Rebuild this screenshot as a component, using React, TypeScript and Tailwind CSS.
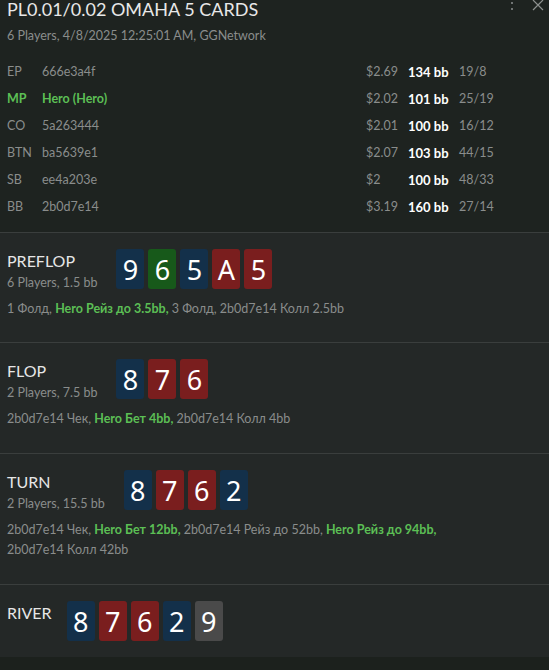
const players = [
  { pos: "EP", name: "666e3a4f", stack: "$2.69", bb: "134 bb", stats: "19/8" },
  { pos: "MP", name: "Hero (Hero)", stack: "$2.02", bb: "101 bb", stats: "25/19", hero: true },
  { pos: "CO", name: "5a263444", stack: "$2.01", bb: "100 bb", stats: "16/12" },
  { pos: "BTN", name: "ba5639e1", stack: "$2.07", bb: "103 bb", stats: "44/15" },
  { pos: "SB", name: "ee4a203e", stack: "$2", bb: "100 bb", stats: "48/33" },
  { pos: "BB", name: "2b0d7e14", stack: "$3.19", bb: "160 bb", stats: "27/14" },
];

type Suit = "b" | "g" | "r" | "x";
const suitBg: Record<Suit, string> = {
  b: "bg-[#13304a]",
  g: "bg-[#17591a]",
  r: "bg-[#7a1e1e]",
  x: "bg-[#4a4a4a]",
};

function Card({ v, s }: { v: string; s: Suit }) {
  return (
    <div
      className={`${suitBg[s]} flex h-10 w-7 items-center justify-center rounded-[3px] font-['Noto_Sans'] text-[27px] leading-none text-white`}
    >
      {v}
    </div>
  );
}

type Act = { t: string; hero?: boolean };

function Street({
  title,
  sub,
  cards,
  actions,
  pb,
}: {
  title: string;
  sub?: string;
  cards: [string, Suit][];
  actions?: Act[];
  pb: string;
}) {
  return (
    <div className={`border-t border-[#3a3e3d] px-[7px] pt-4 ${pb}`}>
      <div className={`flex items-start ${sub ? "gap-[19px]" : "gap-[15px]"}`}>
        <div className="pt-[2px]">
          <div className="text-[16px] leading-5 text-[#e6e6e6]">{title}</div>
          {sub && <div className="mt-[3px] text-[12.5px] leading-[18px] text-[#8a8d8c]">{sub}</div>}
        </div>
        <div className="flex gap-[4px]">
          {cards.map(([v, s], i) => (
            <Card key={i} v={v} s={s} />
          ))}
        </div>
      </div>
      {actions && (
        <div className="mt-[7px] pr-[60px] text-[12.5px] leading-5 text-[#8a8d8c]">
          {actions.map((a, i) => (
            <span key={i} className={a.hero ? "font-bold text-[#5cbf55]" : ""}>
              {a.t}
              {i < actions.length - 1 ? ", " : ""}
            </span>
          ))}
        </div>
      )}
    </div>
  );
}

export default function App() {
  return (
    <div
      className="flex h-[670px] w-[549px] flex-col overflow-hidden bg-[#1c211d]"
      style={{ fontFamily: 'Lato, "Noto Sans", sans-serif' }}
    >
      <div className="bg-[#1e2320] px-[7px] pb-[11px]">
        <div className="flex items-start justify-between">
          <div className="text-[18px] leading-[18px] text-[#e8e8e8]">PL0.01/0.02 OMAHA 5 CARDS</div>
          <div className="-mr-[2px] flex items-start gap-[18px] text-[#8d918f]">
            <svg width="4" height="12" viewBox="0 0 4 12">
              <circle cx="2" cy="3" r="1" fill="currentColor" />
              <circle cx="2" cy="9" r="1" fill="currentColor" />
            </svg>
            <svg width="12" height="11" viewBox="0 0 12 11" stroke="currentColor" strokeWidth="1.2">
              <path d="M1 0 L11 10 M11 0 L1 10" />
            </svg>
          </div>
        </div>
        <div className="mt-[9px] text-[12.5px] leading-[18px] text-[#8a8d8c]">
          6 Players, 4/8/2025 12:25:01 AM, GGNetwork
        </div>
        <div className="mt-[14px] flex flex-col">
          {players.map((p) => (
            <div key={p.pos} className="flex h-[27px] items-center text-[12.5px]">
              <div className={`w-[35px] ${p.hero ? "font-bold text-[#5cbf55]" : "text-[#8a8d8c]"}`}>{p.pos}</div>
              <div className={`flex-1 ${p.hero ? "font-bold text-[#5cbf55]" : "text-[#8a8d8c]"}`}>{p.name}</div>
              <div className="w-[42px] text-[#8a8d8c]">{p.stack}</div>
              <div className="w-[51px] font-bold text-[13px] text-white">{p.bb}</div>
              <div className="w-[83px] text-[#8a8d8c]">{p.stats}</div>
            </div>
          ))}
        </div>
      </div>
      <div className="bg-[#242827]">
        <Street
          title="PREFLOP"
          sub="6 Players, 1.5 bb"
          cards={[["9", "b"], ["6", "g"], ["5", "b"], ["A", "r"], ["5", "r"]]}
          actions={[
            { t: "1 Фолд" },
            { t: "Hero Рейз до 3.5bb", hero: true },
            { t: "3 Фолд" },
            { t: "2b0d7e14 Колл 2.5bb" },
          ]}
          pb="pb-[23px]"
        />
        <Street
          title="FLOP"
          sub="2 Players, 7.5 bb"
          cards={[["8", "b"], ["7", "r"], ["6", "r"]]}
          actions={[
            { t: "2b0d7e14 Чек" },
            { t: "Hero Бет 4bb", hero: true },
            { t: "2b0d7e14 Колл 4bb" },
          ]}
          pb="pb-[24px]"
        />
        <Street
          title="TURN"
          sub="2 Players, 15.5 bb"
          cards={[["8", "b"], ["7", "r"], ["6", "r"], ["2", "b"]]}
          actions={[
            { t: "2b0d7e14 Чек" },
            { t: "Hero Бет 12bb", hero: true },
            { t: "2b0d7e14 Рейз до 52bb" },
            { t: "Hero Рейз до 94bb", hero: true },
            { t: "2b0d7e14 Колл 42bb" },
          ]}
          pb="pb-[24px]"
        />
        <Street
          title="RIVER"
          cards={[["8", "b"], ["7", "r"], ["6", "r"], ["2", "b"], ["9", "x"]]}
          pb="pb-4"
        />
      </div>
    </div>
  );
}
